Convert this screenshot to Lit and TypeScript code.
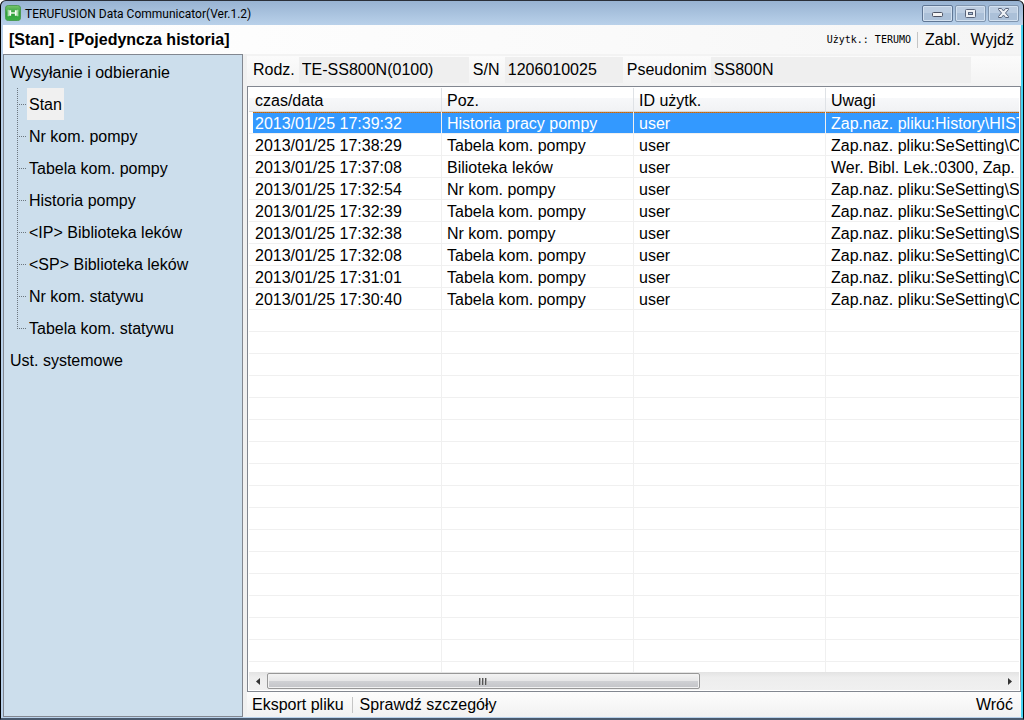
import { LitElement, html, css, svg } from "lit";
import { customElement, state } from "lit/decorators.js";
import { classMap } from "lit/directives/class-map.js";

interface HistoryEntry {
  time: string;
  item: string;
  user: string;
  note: string;
}

const entries: HistoryEntry[] = [
  { time: "2013/01/25 17:39:32", item: "Historia pracy pompy", user: "user", note: "Zap.naz. pliku:History\\HISTORY" },
  { time: "2013/01/25 17:38:29", item: "Tabela kom. pompy", user: "user", note: "Zap.naz. pliku:SeSetting\\Comm" },
  { time: "2013/01/25 17:37:08", item: "Bilioteka leków", user: "user", note: "Wer. Bibl. Lek.:0300, Zap. naz." },
  { time: "2013/01/25 17:32:54", item: "Nr kom. pompy", user: "user", note: "Zap.naz. pliku:SeSetting\\Set" },
  { time: "2013/01/25 17:32:39", item: "Tabela kom. pompy", user: "user", note: "Zap.naz. pliku:SeSetting\\Comm" },
  { time: "2013/01/25 17:32:38", item: "Nr kom. pompy", user: "user", note: "Zap.naz. pliku:SeSetting\\Set" },
  { time: "2013/01/25 17:32:08", item: "Tabela kom. pompy", user: "user", note: "Zap.naz. pliku:SeSetting\\Comm" },
  { time: "2013/01/25 17:31:01", item: "Tabela kom. pompy", user: "user", note: "Zap.naz. pliku:SeSetting\\Comm" },
  { time: "2013/01/25 17:30:40", item: "Tabela kom. pompy", user: "user", note: "Zap.naz. pliku:SeSetting\\Comm" },
];

const blankRows = Array.from({ length: 50 });

@customElement("title-bar")
export class TitleBar extends LitElement {
  static styles = css`
    :host {
      display: flex;
      align-items: center;
      gap: 4px;
      height: 24px;
      padding: 0 4px 0 4px;
      background: linear-gradient(#98b3d2, #b9d1ea);
      font: 12px/16px Roboto, "Open Sans", sans-serif;
      color: #000;
    }
    .name {
      flex: 1;
      padding-top: 2px;
    }
    .controls {
      display: flex;
      gap: 2px;
    }
    .control {
      display: grid;
      place-items: center;
      width: 31px;
      height: 17px;
      padding: 0;
      border: 1px solid #8095ae;
      border-radius: 2px;
      box-shadow: inset 0 0 0 1px #d3e1f0;
      background: linear-gradient(#bccde1 50%, #abc0d8 50%);
    }
    .minimize {
      border-color: #5f7694;
    }
    svg {
      display: block;
    }
  `;

  render() {
    return html`
      <svg width="16" height="16" viewBox="0 0 17 17" aria-hidden="true">
        <defs>
          <linearGradient id="g" x2="0" y2="1">
            <stop offset="0" stop-color="#79c66c" />
            <stop offset="0.5" stop-color="#2f9e3d" />
            <stop offset="1" stop-color="#3bb045" />
          </linearGradient>
        </defs>
        <rect x="0.5" y="0.5" width="16" height="16" rx="3" fill="url(#g)" stroke="#4a9a50" />
        <path d="M3.500 5v7M13.500 5v7" stroke="#a9dca6" stroke-width="1.500" />
        <path d="M5.500 5.500v6M11.500 5.500v6" stroke="#fff" stroke-width="2" />
        <path d="M6 8.500h5" stroke="#e8f8e6" stroke-width="1.500" />
      </svg>
      <span class="name">TERUFUSION Data Communicator(Ver.1.2)</span>
      <div class="controls">
        <button class="control minimize" aria-label="Minimalizuj">
          <svg width="13" height="9" viewBox="0 0 13 9">
            <rect x="1.5" y="3.500" width="10" height="4" rx="1" fill="#f4f4f4" stroke="#4c5263" />
          </svg>
        </button>
        <button class="control" aria-label="Maksymalizuj">
          <svg width="13" height="9" viewBox="0 0 13 9">
            <rect x="1.5" y="0.5" width="10" height="8" rx="1" fill="#eef1f5" stroke="#59647a" />
            <rect x="4.500" y="3.500" width="4" height="2" fill="#a9bfd8" stroke="#59647a" />
          </svg>
        </button>
        <button class="control" aria-label="Zamknij">
          <svg width="13" height="10" viewBox="0 0 13 10">
            <path
              d="M1.500.5h3l2 2.500 2-2.500h3v1L8.500 5l3 3.500v1h-3l-2-2.500-2 2.500h-3v-1l3-3.500-3-3.500z"
              fill="#eef1f5"
              stroke="#59647a"
            />
          </svg>
        </button>
      </div>
    `;
  }
}

@customElement("nav-tree")
export class NavTree extends LitElement {
  @state() selected = "Stan";

  private branches = [
    "Stan",
    "Nr kom. pompy",
    "Tabela kom. pompy",
    "Historia pompy",
    "<IP> Biblioteka leków",
    "<SP> Biblioteka leków",
    "Nr kom. statywu",
    "Tabela kom. statywu",
  ];

  static styles = css`
    :host {
      display: block;
      box-sizing: border-box;
      padding: 1px 0 0;
      border: 1px solid #828790;
      background: #ccdeec;
    }
    ul {
      list-style: none;
      margin: 0;
      padding: 0;
    }
    button {
      display: block;
      box-sizing: border-box;
      height: 32px;
      border: 0;
      padding: 2px 2px 0;
      background: none;
      font: 16px/30px "Liberation Sans", Arial, sans-serif;
      color: #000;
      white-space: nowrap;
    }
    .root {
      padding-left: 6px;
    }
    .branch {
      display: flex;
      margin-left: 13px;
    }
    .guide {
      width: 10px;
      height: 32px;
      flex: none;
      stroke: #6c767f;
      stroke-dasharray: 1 1;
      fill: none;
    }
    .selected {
      background: #f0f0f0;
    }
  `;

  render() {
    const last = this.branches.length - 1;
    return html`
      <ul>
        <li>
          <button class="root">Wysyłanie i odbieranie</button>
          <ul>
            ${this.branches.map(
              (label, i) => html`
                <li class="branch">
                  <svg class="guide" viewBox="0 0 10 32" aria-hidden="true">
                    ${i === last ? svg`<path d="M.5 0v17" />` : svg`<path d="M.5 0v32" />`}
                    <path d="M0 16.500h9" />
                  </svg>
                  <button
                    class=${classMap({ selected: label === this.selected })}
                    @click=${() => (this.selected = label)}
                  >${label}</button>
                </li>
              `
            )}
          </ul>
        </li>
        <li><button class="root">Ust. systemowe</button></li>
      </ul>
    `;
  }
}

@customElement("history-list")
export class HistoryList extends LitElement {
  @state() selected = 0;

  static styles = css`
    :host {
      display: flex;
      flex-direction: column;
      box-sizing: border-box;
      min-width: 0;
      min-height: 0;
      padding: 1px;
      border: 1px solid #828790;
      background: #fff;
      font: 16px/19px "Liberation Sans", Arial, sans-serif;
      color: #000;
    }
    .viewport {
      flex: 1;
      min-height: 0;
      overflow: hidden;
    }
    table {
      table-layout: fixed;
      width: max(100%, 1312px);
      border-collapse: separate;
      border-spacing: 0;
    }
    .wide {
      width: 193px;
    }
    .medium {
      width: 192px;
    }
    th,
    td {
      box-sizing: border-box;
      padding: 2px 5px 0;
      text-align: left;
      font-weight: normal;
      white-space: nowrap;
      overflow: hidden;
      border-right: 1px solid #f0f0f0;
    }
    th {
      height: 24px;
      border-right-color: #dfe2e6;
      border-bottom: 1px solid #d5d5d5;
      background: linear-gradient(#fff 45%, #f7f8fa 45%, #f1f2f4);
      background-clip: padding-box;
    }
    th:first-child,
    td:first-child {
      padding-left: 6px;
    }
    td {
      height: 22px;
      border-bottom: 1px solid #f0f0f0;
    }
    .selected td {
      color: #fff;
      background:
        repeating-linear-gradient(90deg, #cc6600 0 1px, #b07a48 1px 2px) top / 100% 1px no-repeat,
        #3399ff;
      background-clip: padding-box;
    }
    .selected td:first-child {
      background:
        linear-gradient(#fff, #fff) left / 4px 100% no-repeat,
        repeating-linear-gradient(90deg, #cc6600 0 1px, #b07a48 1px 2px) top / 100% 1px no-repeat,
        #3399ff;
      background-clip: padding-box;
    }
    .scroll {
      display: flex;
      height: 18px;
      background: linear-gradient(#e3e3e3, #ededed 30%, #f0f0f0);
    }
    .arrow {
      display: grid;
      place-items: center;
      width: 18px;
      padding: 0;
      border: 0;
      background: none;
    }
    .track {
      flex: 1;
      padding: 1px 0;
    }
    .thumb {
      display: grid;
      place-items: center;
      box-sizing: border-box;
      width: 59%;
      height: 16px;
      padding: 0;
      border: 1px solid #979797;
      border-radius: 2px;
      background: linear-gradient(#f3f3f3, #e6e6e7 50%, #d0d1d4 50%, #c3c4c8);
      box-shadow: inset 0 0 0 1px #f2f2f2;
    }
    svg {
      display: block;
    }
  `;

  render() {
    return html`
      <div class="viewport">
        <table>
          <colgroup>
            <col class="wide" />
            <col class="medium" />
            <col class="medium" />
            <col />
          </colgroup>
          <thead>
            <tr>
              <th>czas/data</th>
              <th>Poz.</th>
              <th>ID użytk.</th>
              <th>Uwagi</th>
            </tr>
          </thead>
          <tbody>
            ${entries.map(
              (e, i) => html`
                <tr
                  class=${classMap({ selected: i === this.selected })}
                  @click=${() => (this.selected = i)}
                >
                  <td>${e.time}</td>
                  <td>${e.item}</td>
                  <td>${e.user}</td>
                  <td>${e.note}</td>
                </tr>
              `
            )}
            ${blankRows.map(
              () => html`<tr aria-hidden="true"><td></td><td></td><td></td><td></td></tr>`
            )}
          </tbody>
        </table>
      </div>
      <div class="scroll">
        <button class="arrow" aria-label="Przewiń w lewo">
          <svg width="4" height="7" viewBox="0 0 4 7"><path d="M4 0v7L0 3.500z" fill="#333" /></svg>
        </button>
        <div class="track">
          <button class="thumb" aria-label="Pasek przewijania">
            <svg width="9" height="7" viewBox="0 0 9 7">
              <path d="M.5 0v7M3.500 0v7M6.500 0v7" stroke="#555" />
              <path d="M1.500 0v7M4.500 0v7M7.500 0v7" stroke="#aaa" />
            </svg>
          </button>
        </div>
        <button class="arrow" aria-label="Przewiń w prawo">
          <svg width="4" height="7" viewBox="0 0 4 7"><path d="M0 0v7l4-3.500z" fill="#333" /></svg>
        </button>
      </div>
    `;
  }
}

@customElement("app-root")
export class AppRoot extends LitElement {
  static styles = css`
    :host {
      display: block;
      height: 100vh;
      font: 16px/20px "Liberation Sans", Arial, sans-serif;
      color: #000;
    }
    .window {
      display: flex;
      flex-direction: column;
      box-sizing: border-box;
      height: 100%;
      border-style: solid;
      border-width: 1px 1px 2px;
      border-color: #2a2f38 #000 #4a5a6e;
      border-radius: 6px 6px 0 0;
      overflow: hidden;
      background: #000;
    }
    .frame {
      flex: 1;
      min-height: 0;
      display: flex;
      flex-direction: column;
      border-left: 2px solid #b9d1ea;
      border-right: 2px solid #45d2f2;
      border-bottom: 1px solid #b9d1ea;
      background: #f0f0f0;
    }
    .heading {
      display: flex;
      align-items: center;
      height: 29px;
      padding: 0 7px 0 6px;
      background: linear-gradient(90deg, #fff, #fafafa 60%, #f5f5f5);
    }
    h1 {
      flex: 1;
      margin: 0;
      font-size: 16px;
      line-height: 20px;
    }
    .user {
      font: 10px/16px "DejaVu Sans Mono", monospace;
    }
    .action {
      padding: 0;
      border: 0;
      background: none;
      font: inherit;
      color: inherit;
    }
    .divider {
      width: 1px;
      height: 16px;
      margin: 0 7px 0 6px;
      background: #c5c5c5;
    }
    .heading .action + .action {
      margin-left: 10px;
    }
    .body {
      flex: 1;
      min-height: 0;
      display: grid;
      grid-template-columns: 240px minmax(0, 1fr);
      gap: 4px;
    }
    .content {
      display: flex;
      flex-direction: column;
      min-width: 0;
      min-height: 0;
    }
    .details {
      display: flex;
      align-items: center;
      gap: 4px;
      height: 32px;
      padding-left: 6px;
      background: linear-gradient(#f3f3f3 2px, #fbfbfb 2px, #f3f3f3);
    }
    label {
      min-width: 28px;
    }
    .field {
      box-sizing: border-box;
      height: 26px;
      padding: 0 3px;
      border: 0;
      background: #efefef;
      font: inherit;
      color: inherit;
    }
    .model {
      width: 170px;
    }
    .serial {
      width: 118px;
    }
    .alias {
      width: 260px;
    }
    history-list {
      flex: 1;
    }
    .footer {
      display: flex;
      align-items: center;
      height: 25px;
      padding: 0 8px 0 5px;
      background: linear-gradient(#fdfdfd, #f1f1f1);
    }
    .footer .divider {
      margin: 0 7px 0 8px;
    }
    .back {
      margin-left: auto;
    }
  `;

  render() {
    return html`
      <div class="window">
        <title-bar></title-bar>
        <div class="frame">
          <header class="heading">
            <h1>[Stan] - [Pojedyncza historia]</h1>
            <span class="user">Użytk.: TERUMO</span>
            <span class="divider"></span>
            <button class="action">Zabl.</button>
            <button class="action">Wyjdź</button>
          </header>
          <div class="body">
            <nav-tree></nav-tree>
            <main class="content">
              <div class="details">
                <label for="model">Rodz.</label>
                <input id="model" class="field model" readonly value="TE-SS800N(0100)" />
                <label for="serial">S/N</label>
                <input id="serial" class="field serial" readonly value="1206010025" />
                <label for="alias">Pseudonim</label>
                <input id="alias" class="field alias" readonly value="SS800N" />
              </div>
              <history-list></history-list>
              <footer class="footer">
                <button class="action">Eksport pliku</button>
                <span class="divider"></span>
                <button class="action">Sprawdź szczegóły</button>
                <button class="action back">Wróć</button>
              </footer>
            </main>
          </div>
        </div>
      </div>
    `;
  }
}
